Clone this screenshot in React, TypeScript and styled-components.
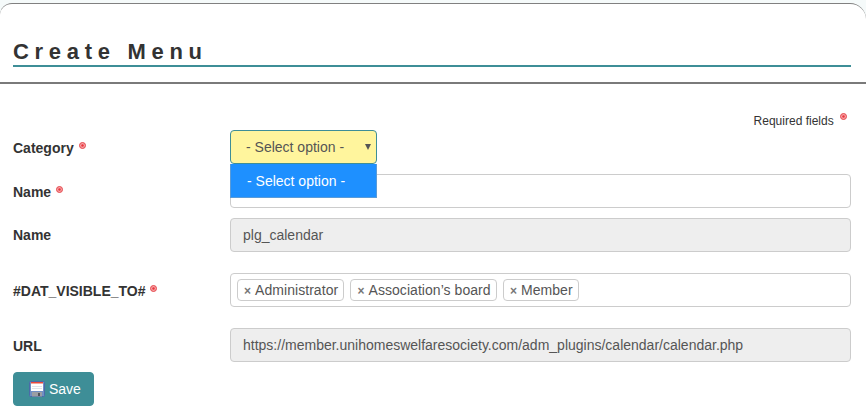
import React from 'react';
import styled, { createGlobalStyle } from 'styled-components';

const GlobalStyle = createGlobalStyle`
  html, body {
    margin: 0;
    padding: 0;
    background: #fff;
  }
  body {
    font-family: 'Liberation Sans', Arial, sans-serif;
    font-size: 14px;
    color: #333;
  }
  * {
    box-sizing: border-box;
  }
`;

const RequiredDot = ({ $note }: { $note?: boolean }) => (
  <Dot $note={$note} viewBox="0 0 7 7" aria-hidden="true">
    <circle cx="3.5" cy="3.5" r="3" fill="#f7a1a4" stroke="#e5484d" strokeWidth="1" />
    <circle cx="3.5" cy="3.5" r="1.2" fill="#e8343c" />
  </Dot>
);

const SaveIcon = () => (
  <svg width="16" height="16" viewBox="0 0 16 16" aria-hidden="true">
    <rect x="0.5" y="0.5" width="15" height="15" rx="1" fill="#6f8fc4" stroke="#4a6aa8" />
    <rect x="2" y="1" width="12" height="9" fill="#fff" />
    <rect x="2" y="1" width="12" height="1.5" fill="#ea4a3c" />
    <rect x="3" y="5" width="10" height="1" fill="#e0e3ea" />
    <rect x="3" y="7" width="10" height="1" fill="#e0e3ea" />
    <rect x="3" y="11" width="10" height="4.5" fill="#9a9ea4" />
    <rect x="9" y="12" width="2" height="3" fill="#50545a" />
  </svg>
);

const Tag = ({ label }: { label: string }) => (
  <TagBox>
    <TagRemove>×</TagRemove>
    {label}
  </TagBox>
);

export default function App() {
  return (
    <Page>
      <GlobalStyle />
      <Card>
        <Header>
          <Title>Create Menu</Title>
        </Header>
        <Body>
          <RequiredNote>
            Required fields <RequiredDot $note />
          </RequiredNote>
          <Row $height={44}>
            <Label $low>
              Category <RequiredDot />
            </Label>
            <SelectWrap>
              <Select>
                - Select option -
                <Caret />
              </Select>
              <Dropdown>- Select option -</Dropdown>
            </SelectWrap>
          </Row>
          <Row $height={44}>
            <Label $low>
              Name <RequiredDot />
            </Label>
            <Field>plg_calendar</Field>
          </Row>
          <Row $height={55}>
            <Label>Name</Label>
            <Field $disabled>plg_calendar</Field>
          </Row>
          <Row $height={55}>
            <Label $low>
              #DAT_VISIBLE_TO# <RequiredDot />
            </Label>
            <TagField>
              <Tag label="Administrator" />
              <Tag label="Association’s board" />
              <Tag label="Member" />
            </TagField>
          </Row>
          <Row $height={44}>
            <Label $low>URL</Label>
            <Field $disabled>
              https://member.unihomeswelfaresociety.com/adm_plugins/calendar/calendar.php
            </Field>
          </Row>
          <SaveButton>
            <SaveIcon />
            Save
          </SaveButton>
        </Body>
      </Card>
    </Page>
  );
}

const Page = styled.div`
  width: 866px;
  height: 416px;
  overflow: hidden;
  padding-top: 3px;
  background: #f5fafa;
`;
const Card = styled.div`
  height: 413px;
  background: #fff;
  border-top: 1px solid #808080;
  border-radius: 12px 16px 0 0;
`;
const Header = styled.div`
  height: 80px;
  padding: 34px 15px 0 13px;
  border-bottom: 2px solid #7a7a7a;
`;
const Title = styled.h1`
  margin: 0;
  height: 29px;
  font-size: 22px;
  line-height: 28px;
  font-weight: 700;
  letter-spacing: 5.7px;
  color: #333;
  border-bottom: 2px solid #3e8e97;
`;
const Body = styled.div`
  padding: 0 15px 0 13px;
`;
const RequiredNote = styled.div`
  height: 46px;
  padding: 29px 4px 0 0;
  text-align: right;
  font-size: 12px;
  line-height: 16px;
  color: #333;
`;
const Dot = styled.svg<{ $note?: boolean }>`
  width: 7px;
  height: 7px;
  margin-left: ${({ $note }) => ($note ? 3 : 1)}px;
  vertical-align: ${({ $note }) => ($note ? 5 : 4)}px;
`;
const Row = styled.div<{ $height: number }>`
  display: grid;
  grid-template-columns: 217px 1fr;
  align-items: start;
  height: ${({ $height }) => $height}px;
`;
const Label = styled.div<{ $low?: boolean }>`
  font-size: 14px;
  font-weight: 700;
  line-height: ${({ $low }) => ($low ? 36 : 34)}px;
  color: #333;
`;
const Field = styled.div<{ $disabled?: boolean }>`
  height: 34px;
  padding: 0 12px;
  font-size: 14px;
  line-height: ${({ $disabled }) => ($disabled ? 32 : 31)}px;
  color: #555;
  white-space: nowrap;
  background: ${({ $disabled }) => ($disabled ? '#eee' : '#fff')};
  border: 1px solid #ccc;
  border-radius: 4px;
`;
const SelectWrap = styled.div`
  position: relative;
  width: 147px;
`;
const Select = styled.div`
  position: relative;
  height: 34px;
  padding-left: 15px;
  font-size: 14px;
  line-height: 32px;
  color: #555;
  background: #fff59d;
  border: 1px solid #3e8e97;
  border-radius: 4px;
`;
const Caret = styled.span`
  position: absolute;
  top: 13px;
  right: 5px;
  border-left: 3.5px solid transparent;
  border-right: 3.5px solid transparent;
  border-top: 6px solid #555;
`;
const Dropdown = styled.div`
  position: absolute;
  top: 34px;
  left: 0;
  width: 147px;
  height: 34px;
  padding-left: 16px;
  font-size: 14px;
  line-height: 34px;
  color: #fff;
  background: #1e90ff;
  border: 1px solid #5a9bd8;
  border-top: none;
`;
const TagField = styled.div`
  display: flex;
  align-items: center;
  gap: 6px;
  height: 34px;
  padding: 0 6px;
  background: #fff;
  border: 1px solid #ccc;
  border-radius: 4px;
`;
const TagBox = styled.span`
  height: 22px;
  padding: 0 5.3px 0 6px;
  font-size: 14px;
  line-height: 20px;
  letter-spacing: 0.05px;
  color: #555;
  background: #fff;
  border: 1px solid #ccc;
  border-radius: 4px;
`;
const TagRemove = styled.span`
  margin-right: 4px;
  font-size: 12px;
  font-weight: 700;
  color: #777;
`;
const SaveButton = styled.button`
  display: flex;
  align-items: center;
  gap: 4px;
  width: 81px;
  height: 34px;
  padding: 0 0 0 15px;
  font-family: inherit;
  font-size: 14px;
  color: #fff;
  background: #3e8e97;
  border: 1px solid #3e8e97;
  border-radius: 4px;
`;
